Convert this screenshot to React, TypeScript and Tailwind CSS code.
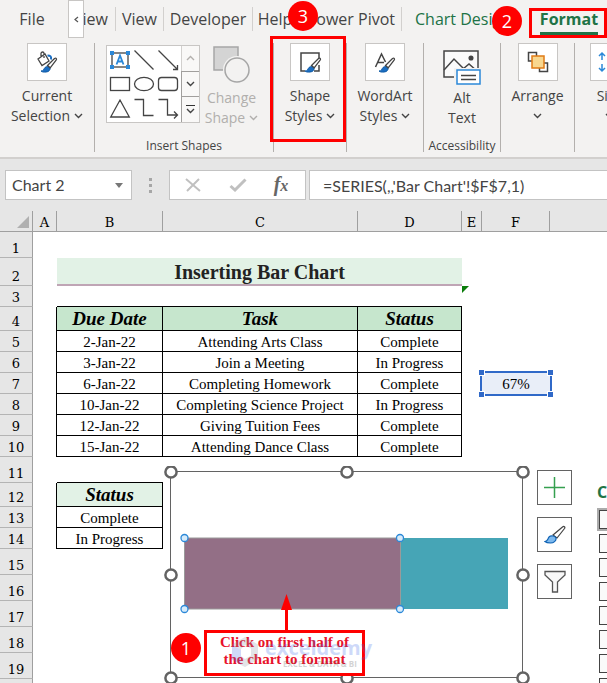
import React from "react";

type Wrap = { children?: React.ReactNode };

const RIBBON_FONT = "font-['Open_Sans',sans-serif]";
const SHEET_FONT = "font-['Liberation_Serif',serif]";
const HEADER_FONT = "font-['DejaVu_Serif',serif]";

function Chevron({ className = "" }: { className?: string }) {
  return (
    <svg width="9" height="6" viewBox="0 0 9 6" className={className} fill="none" stroke="currentColor" strokeWidth="1.4">
      <path d="M1 1l3.5 3.5L8 1" />
    </svg>
  );
}

function Brush() {
  return (
    <g>
      <path d="M-8 7c3 0 2.500-2 4-3.500 1.500-1.500 4.500-1 5 .5s-1 4-4 4c-2 .3-4 0-5-1z" fill="#1b6ec2" stroke="#0f5aa5" strokeWidth="1" />
      <path d="M-1.500 1.500L5.500 -5.500c1.500-1 2.600.2 1.600 1.600L1.200 3.800z" fill="#fff" stroke="#444" strokeWidth="1.300" />
    </g>
  );
}

function IconBox({ children }: Wrap) {
  return (
    <span className="flex h-[38px] w-10 shrink-0 items-center justify-center border border-[#c8c6c4] bg-white">
      <svg width="24" height="24" viewBox="0 0 24 24" fill="none">
        {children}
      </svg>
    </span>
  );
}

function RibbonButton({ icon, first, second, chevron }: { icon: React.ReactNode; first: string; second?: string; chevron?: boolean }) {
  return (
    <button className="flex flex-col items-center text-[14px] leading-5 whitespace-nowrap">
      <IconBox>{icon}</IconBox>
      <span className="mt-[5px]">{first}</span>
      <span className="flex h-5 items-center gap-1">
        {second}
        {chevron && <Chevron />}
      </span>
    </button>
  );
}

function Group({ className, label, children }: Wrap & { className: string; label?: string }) {
  return (
    <section className={`flex h-[109px] shrink-0 flex-col items-center border-r border-[#b3b0ad] ${className}`}>
      <div className="flex w-full flex-1 justify-center">{children}</div>
      {label && <div className="h-3 text-[12px] leading-3 whitespace-nowrap">{label}</div>}
    </section>
  );
}

function Tab({ className, children }: Wrap & { className: string }) {
  return <button className={`h-6 shrink-0 text-center whitespace-nowrap ${className}`}>{children}</button>;
}

function ShapeGallery() {
  return (
    <div className="flex h-[78px] w-[94px] border border-[#c8c6c4] bg-white">
      <svg width="74" height="76" viewBox="107 46 74 76" fill="none" stroke="#444" strokeWidth="1.300">
        <rect x="112" y="53" width="16" height="14" />
        <g fill="#2b88d8" stroke="none">
          <rect x="110" y="51" width="4" height="4" />
          <rect x="126" y="51" width="4" height="4" />
          <rect x="110" y="65" width="4" height="4" />
          <rect x="126" y="65" width="4" height="4" />
        </g>
        <path d="M116.500 64.500l3.500-9 3.500 9M117.600 61.500h4.800" stroke="#2b88d8" strokeWidth="1.800" />
        <path d="M134.500 50.500l19 19M158.500 50.500l19 19M177.500 65v4.500H173" />
        <rect x="110.500" y="77.500" width="19" height="13" />
        <ellipse cx="144" cy="84" rx="9.500" ry="6.700" />
        <rect x="158.500" y="77.500" width="19" height="13" rx="3" />
        <path d="M120 100l9.300 17h-18.600zM134.500 99.500h9v16h10M158.500 99.500h9v15.500h10M174 111.500l3.500 3.500-3.500 3.500" />
      </svg>
      <div className="flex flex-1 flex-col bg-[#f9f8f7]">
        <button aria-label="Previous shapes" className="flex flex-1 items-center justify-center border-l border-[#d2d0ce] text-[#b3b0ad]">
          <Chevron className="rotate-180" />
        </button>
        <button aria-label="Next shapes" className="flex flex-1 items-center justify-center border border-r-0 border-[#a19f9d]">
          <Chevron />
        </button>
        <button aria-label="More shapes" className="flex flex-1 flex-col items-center justify-center gap-0.5 border-l border-[#a19f9d]">
          <span className="h-px w-[9px] bg-[#333]" />
          <Chevron />
        </button>
      </div>
    </div>
  );
}

function Ribbon() {
  return (
    <header className={`relative h-[159px] overflow-hidden border-b-2 border-[#d2d0ce] bg-[#f3f2f1] text-[#444] ${RIBBON_FONT}`}>
      <nav className="flex h-[38px] items-start text-[16px] leading-6">
        <Tab className="mt-[7px] w-[68px] pr-1">File</Tab>
        <button aria-label="Scroll tabs left" className="flex h-[38px] w-4 shrink-0 items-center justify-center border border-[#c8c6c4] bg-white">
          <svg width="5" height="7" viewBox="0 0 5 7" fill="none" stroke="#555" strokeWidth="1.200">
            <path d="M4 1L1 3.500 4 6" />
          </svg>
        </button>
        <div className="mt-[7px] flex w-8 shrink-0 justify-end overflow-hidden border-r border-[#d2d0ce] pr-[7px]">
          <Tab className="">Review</Tab>
        </div>
        <Tab className="mt-[7px] w-12 border-r border-[#d2d0ce]">View</Tab>
        <Tab className="mt-[7px] w-[89px] border-r border-[#d2d0ce]">Developer</Tab>
        <Tab className="mt-[7px] w-11">Help</Tab>
        <Tab className="mt-[7px] w-[105px] border-r border-[#d2d0ce] pr-1.5 text-right">Power Pivot</Tab>
        <Tab className="mt-[7px] w-[127px] pl-[13px] text-left text-[#217346]">Chart Design</Tab>
        <Tab className="mt-[7px] w-20 font-bold text-[#217346]">
          <span className="inline-block h-7 border-b-3 border-[#217346]">Format</span>
        </Tab>
      </nav>

      <div className="mt-[5px] flex">
        <Group className="w-[95px]">
          <RibbonButton
            first="Current"
            second="Selection"
            chevron
            icon={
              <>
                <path d="M3 9l7-5 4 7-7 4.500zM6 7.500V3.500c0-2 3-2 3 0V8" stroke="#444" strokeWidth="1.300" fill="#fff" />
                <path d="M12.500 5.500c3 0 4 1 3.500 4" stroke="#1b6ec2" strokeWidth="2" />
                <g transform="translate(14 14)">
                  <Brush />
                </g>
              </>
            }
          />
        </Group>
        <Group className="w-[179px]" label="Insert Shapes">
          <div className="flex w-full justify-center gap-[5px] pt-0.5 pr-1">
            <ShapeGallery />
            <button disabled className="flex flex-col items-center text-[14px] leading-5 whitespace-nowrap text-[#b1afad]">
              <svg width="38" height="38" viewBox="0 0 38 38" fill="#d4d4d4" stroke="#a6a6a6" strokeWidth="1.500">
                <rect x="1" y="2" width="24" height="23" />
                <circle cx="24" cy="25" r="14" fill="#f3f2f1" stroke="none" />
                <circle cx="24" cy="25" r="12" fill="#f3f2f1" />
              </svg>
              <span className="mt-[5px]">Change</span>
              <span className="flex h-5 items-center gap-1">
                Shape <Chevron />
              </span>
            </button>
          </div>
        </Group>
        <Group className="w-[73px]">
          <RibbonButton
            first="Shape"
            second="Styles"
            chevron
            icon={
              <>
                <path d="M7 21H3V3h18v6M21 15v6h-5" stroke="#444" strokeWidth="1.500" />
                <g transform="translate(15 14)">
                  <Brush />
                </g>
              </>
            }
          />
        </Group>
        <Group className="w-[77px]">
          <RibbonButton
            first="WordArt"
            second="Styles"
            chevron
            icon={
              <>
                <path d="M2.500 17L8.500 4l4 8M5 12.500h6" stroke="#444" strokeWidth="1.500" />
                <g transform="translate(14 14)">
                  <Brush />
                </g>
              </>
            }
          />
        </Group>
        <Group className="w-[77px]" label="Accessibility">
          <button className="flex flex-col items-center pt-0.5 text-[14px] leading-5">
            <svg width="40" height="40" viewBox="0 0 40 40" fill="none" stroke="#444" strokeWidth="1.500" className="shrink-0">
              <rect x="2" y="6" width="34" height="26" fill="#fafafa" />
              <path d="M2 25L12 14l14 14M21 24l6-5 8 7" />
              <circle cx="29" cy="13" r="1.800" fill="#444" />
              <path d="M14 25h24v14H14z" fill="#fff" stroke="#f3f2f1" strokeWidth="4" />
              <rect x="15" y="25" width="23" height="14" fill="#fff" stroke="#2b88d8" />
              <path d="M19 30.500h15M19 34.500h15" strokeWidth="1.300" />
            </svg>
            <span className="mt-[3px]">Alt</span>
            <span>Text</span>
          </button>
        </Group>
        <Group className="w-[74px]">
          <RibbonButton
            first="Arrange"
            chevron
            icon={
              <>
                <path d="M6 11H2.500V2.500h8V6M18 13h3.500v8.500h-8V18" stroke="#444" strokeWidth="1.500" />
                <rect x="6" y="6" width="12" height="12" fill="#f8d78f" stroke="#e07b16" strokeWidth="1.500" />
              </>
            }
          />
        </Group>
        <Group className="w-[70px]">
          <RibbonButton
            first="Size"
            chevron
            icon={
              <>
                <path d="M4 10V3M1 6l3-3 3 3M4 14v7M1 18l3 3 3-3" stroke="#2b88d8" strokeWidth="1.500" />
                <path d="M10 3h12v18H10z" stroke="#444" strokeWidth="1.500" />
              </>
            }
          />
        </Group>
      </div>

      <div className="absolute top-2 left-[529px] h-[30px] w-[78px] border-3 border-[#ff0000]" />
      <Badge className="top-1.5 left-[492px]">2</Badge>
      <div className="absolute top-9 left-[270px] h-[106px] w-[76px] border-3 border-[#ff0000]" />
      <Badge className="top-px left-72">3</Badge>
    </header>
  );
}

function Badge({ className, children }: Wrap & { className: string }) {
  return (
    <span
      className={`absolute flex size-[30px] items-center justify-center rounded-full bg-[#ff0000] font-['Open_Sans',sans-serif] text-[18px] leading-none text-white ${className}`}
    >
      {children}
    </span>
  );
}

function FormulaBar() {
  return (
    <div className="flex h-[52px] shrink-0 items-start bg-[#e6e6e6] pt-[11px] pl-[5px] font-['Lato',sans-serif] text-[16px] text-[#444]">
      <div className="flex h-[30px] w-[127px] shrink-0 items-center border border-[#c3c3c3] bg-white">
        <input aria-label="Name box" defaultValue="Chart 2" className="w-[101px] pl-1.5 outline-none" />
        <button aria-label="Open name list" className="flex flex-1 justify-center">
          <svg width="8" height="5" viewBox="0 0 8 5" fill="#777">
            <path d="M0 0h8L4 5z" />
          </svg>
        </button>
      </div>
      <div className="flex h-[30px] w-[37px] shrink-0 flex-col items-center justify-center gap-[3px]">
        <span className="size-[3px] bg-[#a6a6a6]" />
        <span className="size-[3px] bg-[#a6a6a6]" />
        <span className="size-[3px] bg-[#a6a6a6]" />
      </div>
      <div className="flex h-[30px] w-[137px] shrink-0 items-center border border-[#c3c3c3] bg-white">
        <button aria-label="Cancel" className="flex w-[45px] justify-center">
          <svg width="16" height="14" viewBox="0 0 16 14" stroke="#c0c0c0" strokeWidth="2">
            <path d="M1 1l14 12M14 1L2 13" />
          </svg>
        </button>
        <button aria-label="Enter" className="flex w-[45px] justify-center">
          <svg width="18" height="14" viewBox="0 0 18 14" fill="none" stroke="#c0c0c0" strokeWidth="3">
            <path d="M1.500 8l4.500 4L16.500 1.500" />
          </svg>
        </button>
        <button className="w-[42px] text-center font-['Liberation_Serif',serif] text-[20px] leading-6 font-bold text-[#666] italic">
          f<span className="text-[16px]">x</span>
        </button>
      </div>
      <input
        aria-label="Formula bar"
        defaultValue="=SERIES(,,'Bar Chart'!$F$7,1)"
        className="ml-[3px] h-[30px] min-w-0 flex-1 border border-r-0 border-[#c3c3c3] bg-white pl-[13px] outline-none"
      />
    </div>
  );
}

const tasks = [
  ["2-Jan-22", "Attending Arts Class", "Complete"],
  ["3-Jan-22", "Join a Meeting", "In Progress"],
  ["6-Jan-22", "Completing Homework", "Complete"],
  ["10-Jan-22", "Completing Science Project", "In Progress"],
  ["12-Jan-22", "Giving Tuition Fees", "Complete"],
  ["15-Jan-22", "Attending Dance Class", "Complete"],
];

function Row({ n, height, children }: Wrap & { n: number; height: string }) {
  return (
    <tr className={height}>
      <th
        scope="row"
        className={`border-r border-b border-r-[#9f9f9f] border-b-[#b4b4b4] bg-[#e6e6e6] align-bottom text-[13px] leading-4 font-normal ${HEADER_FONT}`}
      >
        {n}
      </th>
      {children}
    </tr>
  );
}

const BOX = "border-r border-b border-black pt-px";
const HEAD = "border-r border-b border-black text-[19px] font-bold italic";

function Worksheet() {
  return (
    <table className={`w-full table-fixed border-separate border-spacing-0 text-center text-[15px] leading-[18px] text-black [&_td]:whitespace-nowrap ${SHEET_FONT}`}>
      <colgroup>
        <col className="w-[33px]" />
        <col className="w-6" />
        <col className="w-[106px]" />
        <col className="w-[195px]" />
        <col className="w-[104px]" />
        <col className="w-5" />
        <col className="w-[68px]" />
        <col />
      </colgroup>
      <thead>
        <tr className={`h-[21px] bg-[#e6e6e6] text-[13px] leading-4 ${HEADER_FONT} [&>*]:border-b [&>*]:border-[#9f9f9f] [&>*]:align-bottom [&>*]:font-normal [&>*:not(:last-child)]:border-r`}>
          <td>
            <svg width="12" height="12" viewBox="0 0 12 12" fill="#b0b0b0" className="mr-[3px] mb-[3px] ml-auto">
              <path d="M12 0v12H0z" />
            </svg>
          </td>
          {["A", "B", "C", "D", "E", "F"].map((c) => (
            <th key={c} scope="col">
              {c}
            </th>
          ))}
          <td />
        </tr>
      </thead>
      <tbody>
        <Row n={1} height="h-[26px]" />
        <Row n={2} height="h-7">
          <td />
          <td colSpan={3} className="border-b-2 border-[#bfa5b5] bg-[#e2f2e6] pt-0.5 text-[20px] leading-6 font-bold text-[#222]">
            Inserting Bar Chart
          </td>
        </Row>
        <Row n={3} height="h-[21px]">
          <td />
          <td className="border-b border-black" />
          <td className="border-b border-black" />
          <td className="border-b border-black" />
          <td className="align-top">
            <svg width="7" height="7" viewBox="0 0 7 7" fill="#0a7d0a" className="block">
              <path d="M0 0h7L0 7z" />
            </svg>
          </td>
        </Row>
        <Row n={4} height="h-6">
          <td className="border-r border-black" />
          {["Due Date", "Task", "Status"].map((t) => (
            <td key={t} className={`${HEAD} bg-[#c6e6cd]`}>
              {t}
            </td>
          ))}
        </Row>
        {tasks.map(([date, task, status], i) => (
          <Row key={date} n={i + 5} height="h-[21px]">
            <td className="border-r border-black" />
            <td className={BOX}>{date}</td>
            <td className={BOX}>{task}</td>
            <td className={BOX}>{status}</td>
            {i === 2 && (
              <>
                <td />
                <td className="relative bg-[#e9eef8]">
                  67%
                  <span className="absolute -inset-0.5 border-2 border-[#3069c8]" />
                  <span className="absolute -top-1 -left-1 size-[7px] border border-white bg-[#3069c8]" />
                  <span className="absolute -top-1 -right-1 size-[7px] border border-white bg-[#3069c8]" />
                  <span className="absolute -bottom-1 -left-1 size-[7px] border border-white bg-[#3069c8]" />
                  <span className="absolute -right-1 -bottom-1 size-[7px] border border-white bg-[#3069c8]" />
                </td>
              </>
            )}
          </Row>
        ))}
        <Row n={11} height="h-[26px]">
          <td />
          <td className="border-b border-black" />
        </Row>
        <Row n={12} height="h-6">
          <td className="border-r border-black" />
          <td className={`${HEAD} bg-[#e2f2e6]`}>Status</td>
        </Row>
        <Row n={13} height="h-[21px]">
          <td className="border-r border-black" />
          <td className={BOX}>Complete</td>
        </Row>
        <Row n={14} height="h-[21px]">
          <td className="border-r border-black" />
          <td className={BOX}>In Progress</td>
        </Row>
        {[15, 16, 17, 18, 19, 20].map((n) => (
          <Row key={n} n={n} height="h-[26px]" />
        ))}
      </tbody>
    </table>
  );
}

const handles = [
  [171, 472], [347, 472], [523, 472], [171, 575], [523, 575], [171, 678], [347, 678], [523, 678],
];
const barHandles = [
  [184.5, 538], [400, 538], [184.5, 609], [400, 609],
];

function ChartObject() {
  return (
    <>
      <svg width="366" height="220" viewBox="164 466 366 220" className="absolute top-[255px] left-[164px]">
        <rect x="170.500" y="471.500" width="352" height="206" fill="#fff" stroke="#636363" />
        <rect x="400" y="538" width="108" height="71" fill="#46a5b6" />
        <rect x="184.500" y="538" width="216" height="71" fill="#936f86" stroke="#9a9a9a" />
        {handles.map(([x, y]) => (
          <circle key={`${x}-${y}`} cx={x} cy={y} r="5.600" fill="#fff" stroke="#636363" strokeWidth="2.500" />
        ))}
        {barHandles.map(([x, y]) => (
          <circle key={`${x}-${y}`} cx={x} cy={y} r="3.500" fill="#d6ebfa" stroke="#2b88d8" strokeWidth="1.300" />
        ))}
        <path d="M286.500 594l5.500 16h-4v21h-3v-21h-4z" fill="#ff0000" />
      </svg>

      <Badge className="top-[422px] left-[171px]">1</Badge>
      <div className="absolute top-[419px] left-[204px] h-[46px] w-[161px] border-3 border-[#ff0000] bg-white pt-px text-center font-['Liberation_Serif',serif] text-[15px] leading-[17px] font-bold whitespace-nowrap text-[#e8122a]">
        Click on first half of
        <br />
        the chart to format
      </div>
      <div className="absolute top-[425px] left-[231px] flex items-start gap-1.5 opacity-25">
        <svg width="28" height="32" viewBox="0 0 28 32">
          <path d="M14 1l13 7.500v15L14 31l-4-2V17L1 12V8.500z" fill="#8d96a8" />
          <path d="M1 9l9 5v15l-9-5.500z" fill="#4668e8" />
          <path d="M14 9l6 3.500v7L14 23l-4-3v-7z" fill="#fff" />
        </svg>
        <div className="font-['Open_Sans',sans-serif]">
          <div className="text-[20px] leading-6 font-bold text-[#3f6bea]">exceldemy</div>
          <div className="pl-[18px] text-[8px] leading-2 font-bold whitespace-nowrap text-[#555]">EXCEL &amp; DATA &amp; BI</div>
        </div>
      </div>

      <div className="absolute top-[259px] left-[537px] flex flex-col gap-3 [&>button]:flex [&>button]:size-[35px] [&>button]:items-center [&>button]:justify-center [&>button]:border [&>button]:border-[#636363] [&>button]:bg-white">
        <button aria-label="Chart Elements">
          <svg width="21" height="21" viewBox="0 0 21 21" stroke="#35a04f" strokeWidth="1.500">
            <path d="M10.500 0v21M0 10.500h21" />
          </svg>
        </button>
        <button aria-label="Chart Styles">
          <svg width="22" height="20" viewBox="0 0 22 20" fill="#fff" stroke="#444" strokeWidth="1.200">
            <path d="M9 10L18.500 2c1.500-1.300 3 0 2 1.500L13 13z" />
            <path d="M1 16.500c3-.5 2.500-2.500 4-4.500 2-2 6-1 7 1 .5 3-2.500 5-5.500 5-2.500 0-4.500-.5-5.500-1.500z" fill="#7db9ee" stroke="#0f62b4" />
          </svg>
        </button>
        <button aria-label="Chart Filters">
          <svg width="22" height="23" viewBox="0 0 22 23" fill="#f7f7f7" stroke="#555" strokeWidth="1.300">
            <path d="M1 1.500h20V5l-7.500 7v10h-5V12L1 5z" />
          </svg>
        </button>
      </div>
    </>
  );
}

const elementNames = ["Axes", "Axis Titles", "Chart Title", "Data Labels", "Data Table", "Error Bars", "Gridlines", "Legend"];

function ElementsPane() {
  return (
    <aside className="absolute top-[270px] right-0 left-[597px] overflow-hidden">
      <h2 className="font-['Open_Sans',sans-serif] text-[16px] leading-[22px] font-bold whitespace-nowrap text-[#217346]">Chart Elements</h2>
      <div className="mt-[7px] flex flex-col gap-[5px] pl-0.5">
        {elementNames.map((name, i) => (
          <input
            key={name}
            type="checkbox"
            aria-label={name}
            className={`block size-[19px] shrink-0 appearance-none border border-[#444] bg-[#fafafa] ${i === 0 ? "outline-2 outline-[#ababab]" : ""}`}
          />
        ))}
      </div>
    </aside>
  );
}

export default function App() {
  return (
    <main className="flex h-screen flex-col overflow-hidden bg-white">
      <div className="shrink-0">
        <Ribbon />
      </div>
      <FormulaBar />
      <div className="relative min-h-0 flex-1 overflow-hidden">
        <Worksheet />
        <ChartObject />
        <ElementsPane />
      </div>
    </main>
  );
}
